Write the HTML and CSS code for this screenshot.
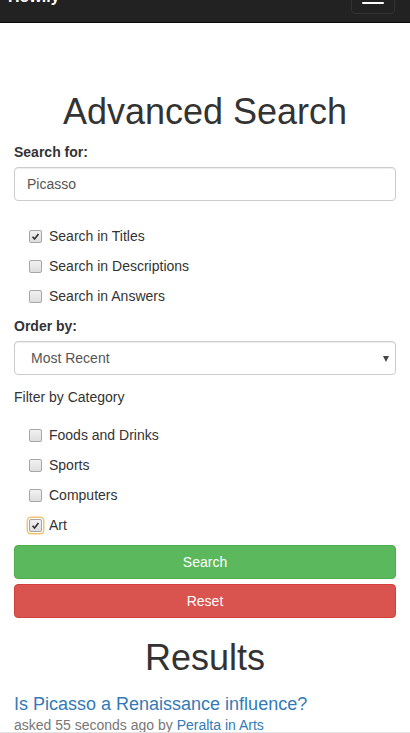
FILE: index.html
```html
<!DOCTYPE html>
<html lang="en">
<head>
<meta charset="utf-8">
<title>Advanced Search - Howlly</title>
<link rel="stylesheet" href="styles.css">
</head>
<body>
<nav class="navbar">
  <a class="brand" href="#">Howlly</a>
  <button class="toggle" type="button" aria-label="Toggle navigation">
    <span class="bar"></span><span class="bar"></span><span class="bar"></span>
  </button>
</nav>

<main class="container">
  <h1 class="page-title">Advanced Search</h1>

  <form class="search-form">
    <label class="field-label" for="q">Search for:</label>
    <input class="form-control" id="q" type="text" value="Picasso">

    <div class="checks checks-scope">
      <label class="check"><span class="box checked"><svg viewBox="0 0 13 13"><path d="M3 6.8 L5.4 9.4 L10 3.6" fill="none" stroke="#333" stroke-width="2"/></svg></span>Search in Titles</label>
      <label class="check"><span class="box"></span>Search in Descriptions</label>
      <label class="check"><span class="box"></span>Search in Answers</label>
    </div>

    <label class="field-label" for="order">Order by:</label>
    <div class="select-wrap">
      <select class="form-control select" id="order">
        <option>Most Recent</option>
        <option>Most Popular</option>
      </select>
      <span class="caret"></span>
    </div>

    <div class="filter-label">Filter by Category</div>
    <div class="checks checks-cat">
      <label class="check"><span class="box"></span>Foods and Drinks</label>
      <label class="check"><span class="box"></span>Sports</label>
      <label class="check"><span class="box"></span>Computers</label>
      <label class="check"><span class="box checked focused"><svg viewBox="0 0 13 13"><path d="M3 6.8 L5.4 9.4 L10 3.6" fill="none" stroke="#333" stroke-width="2"/></svg></span>Art</label>
    </div>

    <div class="actions">
      <button class="btn btn-success" type="button">Search</button>
      <button class="btn btn-danger" type="button">Reset</button>
    </div>
  </form>

  <h1 class="results-title">Results</h1>
  <div class="result">
    <h4 class="result-title"><a href="#">Is Picasso a Renaissance influence?</a></h4>
    <div class="result-meta">asked 55 seconds ago by <a href="#">Peralta in Arts</a></div>
  </div>
</main>
<footer class="page-footer"></footer>
</body>
</html>
```

FILE: styles.css
```css
* { box-sizing: border-box; }

html, body {
  margin: 0;
  padding: 0;
}

body {
  font-family: "Liberation Sans", Arial, sans-serif;
  font-size: 14px;
  line-height: 20px;
  color: #333;
  background: #fff;
}

a { color: #337ab7; text-decoration: none; }

.navbar {
  margin-top: -28px;
  height: 51px;
  background: #222;
  border-bottom: 1px solid #080808;
  display: flex;
  justify-content: space-between;
  align-items: flex-start;
}

.brand {
  padding: 15px 0 0 8px;
  font-size: 16px;
  font-weight: bold;
  line-height: 20px;
  color: #fff;
}

.toggle {
  margin: 8px 15px 0 0;
  width: 44px;
  height: 34px;
  padding: 9px 10px;
  background: transparent;
  border: 1px solid #333;
  border-radius: 4px;
  display: flex;
  flex-direction: column;
  gap: 4px;
}

.toggle .bar {
  display: block;
  width: 22px;
  height: 2px;
  border-radius: 1px;
  background: #fff;
}

.container {
  padding: 0 14px;
}

.page-title,
.results-title {
  font-size: 36px;
  font-weight: normal;
  line-height: 1.1;
  text-align: center;
  color: #333;
}

.page-title { margin: 69px 0 10px; }
.results-title { margin: 20px 0 10px; }

.search-form {
  display: flex;
  flex-direction: column;
}

.field-label {
  display: block;
  font-weight: bold;
  margin-bottom: 5px;
}

.form-control {
  display: block;
  width: 100%;
  height: 34px;
  padding: 6px 12px;
  font-family: inherit;
  font-size: 14px;
  line-height: 20px;
  color: #555;
  background: #fff;
  border: 1px solid #ccc;
  border-radius: 4px;
  box-shadow: inset 0 1px 1px rgba(0,0,0,.075);
  margin: 0;
}

.checks {
  display: flex;
  flex-direction: column;
  gap: 10px;
  padding-left: 15px;
}

.checks-scope { padding-top: 25px; padding-bottom: 10px; }
.checks-cat { padding-top: 18px; padding-bottom: 10px; }

.check {
  display: flex;
  align-items: flex-start;
  gap: 7px;
  height: 20px;
  line-height: 20px;
}

.box {
  flex: none;
  width: 13px;
  height: 13px;
  margin-top: 4px;
  border: 1px solid #a6a6a6;
  border-radius: 2px;
  background: linear-gradient(#f1f1f1, #dedede);
  display: flex;
  align-items: center;
  justify-content: center;
}

.box svg {
  width: 11px;
  height: 11px;
}

.box.focused {
  box-shadow: 0 0 0 1px #fff, 0 0 0 2.5px #f1c470;
}

.select-wrap {
  position: relative;
}

.select {
  -webkit-appearance: none;
  appearance: none;
  padding-left: 16px;
}

.caret {
  position: absolute;
  right: 7px;
  top: 15px;
  width: 0;
  height: 0;
  border-left: 3.5px solid transparent;
  border-right: 3.5px solid transparent;
  border-top: 6px solid #444;
}

.filter-label {
  margin-top: 12px;
}

.actions {
  display: flex;
  flex-direction: column;
  gap: 5px;
}

.btn {
  display: block;
  width: 100%;
  height: 34px;
  padding: 6px 12px;
  font-family: inherit;
  font-size: 14px;
  line-height: 20px;
  color: #fff;
  border: 1px solid transparent;
  border-radius: 4px;
  text-align: center;
}

.btn-success { background: #5cb85c; border-color: #4cae4c; }
.btn-danger { background: #d9534f; border-color: #d43f3a; }

.result-title {
  margin: 18px 0 0;
  font-size: 18px;
  font-weight: normal;
  line-height: 1.1;
}

.result-meta {
  color: #777;
}

.page-footer {
  position: fixed;
  left: 0;
  right: 0;
  bottom: 0;
  height: 1px;
  background: #e3e3e3;
}
```
